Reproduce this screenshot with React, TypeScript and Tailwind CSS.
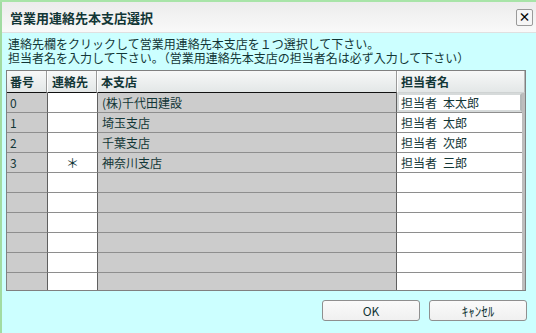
import React from "react";

const rows = [
  { no: "0", contact: "", branch: "(株)千代田建設", person: "担当者\u2002本太郎" },
  { no: "1", contact: "", branch: "埼玉支店", person: "担当者\u2002太郎" },
  { no: "2", contact: "", branch: "千葉支店", person: "担当者\u2002次郎" },
  { no: "3", contact: "＊", branch: "神奈川支店", person: "担当者\u2002三郎" },
  { no: "", contact: "", branch: "", person: "" },
  { no: "", contact: "", branch: "", person: "" },
  { no: "", contact: "", branch: "", person: "" },
  { no: "", contact: "", branch: "", person: "" },
  { no: "", contact: "", branch: "", person: "" },
  { no: "", contact: "", branch: "", person: "" },
];

export default function App() {
  return (
    <div className="w-[536px] h-[333px] flex flex-col bg-[#ccffff] overflow-hidden font-['Noto_Sans_CJK_JP','Liberation_Sans',sans-serif] text-[#123636]">
      <div className="h-[2px] bg-[#a8e4a8]" />
      <div className="flex flex-1">
        <div className="w-[2px] bg-[#a2dca2]" />
        <div className="flex-1 flex flex-col">
          {/* title bar */}
          <div className="h-[31px] flex items-center justify-between pl-[8px] pr-[3px] bg-gradient-to-b from-[#ececec] to-[#f9f9f9] border-b border-[#e0e0e0]">
            <span className="text-[13px] font-bold leading-none">営業用連絡先本支店選択</span>
            <div className="w-[17px] h-[17px] border border-[#9a9a9a] rounded-[2px] bg-[#f6f6f6] flex items-center justify-center text-[12px] font-bold leading-none text-black">
              ×
            </div>
          </div>
          {/* body */}
          <div className="flex flex-col pt-[4px]">
            <div className="pl-[6px] text-[12px] leading-[14px] flex flex-col">
              <span className="h-[14px] overflow-visible">連絡先欄をクリックして営業用連絡先本支店を１つ選択して下さい。</span>
              <span className="h-[14px] overflow-visible">担当者名を入力して下さい。（営業用連絡先本支店の担当者名は必ず入力して下さい）</span>
            </div>
            <div className="ml-[4px] mt-[5px] w-[520px] border border-[#808080] flex flex-col text-[12px]">
              {/* header */}
              <div className="flex h-[22px] bg-gradient-to-b from-[#f7f8f8] to-[#e2e6e6] font-bold">
                <div className="w-[40px] flex items-center pl-[3px] border-r border-[#9a9a9a] border-b border-b-[#111]">番号</div>
                <div className="w-[50px] flex items-center pl-[4px] border-l border-white border-r border-r-[#9a9a9a] border-b border-b-[#111]">連絡先</div>
                <div className="w-[300px] flex items-center pl-[3px] border-l border-white border-r border-r-[#9a9a9a] border-b border-b-[#111]">本支店</div>
                <div className="flex-1 flex items-center pl-[3px] border-l border-white border-r border-r-[#b8b8b8] border-b border-b-[#cfd3d3]">担当者名</div>
              </div>
              {/* rows */}
              <div className="h-[197px] overflow-hidden flex">
                <div className="flex-1 flex flex-col">
                  {rows.map((r, i) => (
                    <div key={i} className="flex h-[20px] shrink-0">
                      <div className="w-[40px] bg-[#cccccc] border-b border-[#8e8e8e] flex items-center pl-[3px] leading-none">{r.no}</div>
                      <div className="w-[51px] bg-white border-l border-r border-[#5f5f5f] border-b border-b-[#8e8e8e] flex items-center justify-center leading-none text-[13px]">{r.contact}</div>
                      <div className="w-[299px] bg-[#cccccc] border-r border-[#5f5f5f] border-b border-b-[#8e8e8e] flex items-center pl-[4px] leading-none">{r.branch}</div>
                      {i === 0 ? (
                        <div className="flex-1 bg-white border-b border-[#8e8e8e]">
                          <div className="h-full border-2 border-[#d6dada] border-r-[#b4b8b8] flex items-center pl-[2px] leading-none">{r.person}</div>
                        </div>
                      ) : (
                        <div className="flex-1 bg-white border-b border-[#8e8e8e] flex items-center pl-[4px] leading-none">{r.person}</div>
                      )}
                    </div>
                  ))}
                </div>
                <div className="w-[3px] bg-[#bdbdbd]" />
              </div>
            </div>
            {/* buttons */}
            <div className="flex justify-end gap-[9px] pr-[9px] mt-[9px]">
              <div className="w-[98px] h-[21px] rounded-[3px] border border-[#8f8f8f] bg-gradient-to-b from-[#fafafa] to-[#f0f0f0] flex items-center justify-center text-[12px] leading-none">OK</div>
              <div className="w-[98px] h-[21px] rounded-[3px] border border-[#8f8f8f] bg-gradient-to-b from-[#fafafa] to-[#f0f0f0] flex items-center justify-center text-[13px] leading-none">ｷｬﾝｾﾙ</div>
            </div>
          </div>
        </div>
      </div>
    </div>
  );
}
